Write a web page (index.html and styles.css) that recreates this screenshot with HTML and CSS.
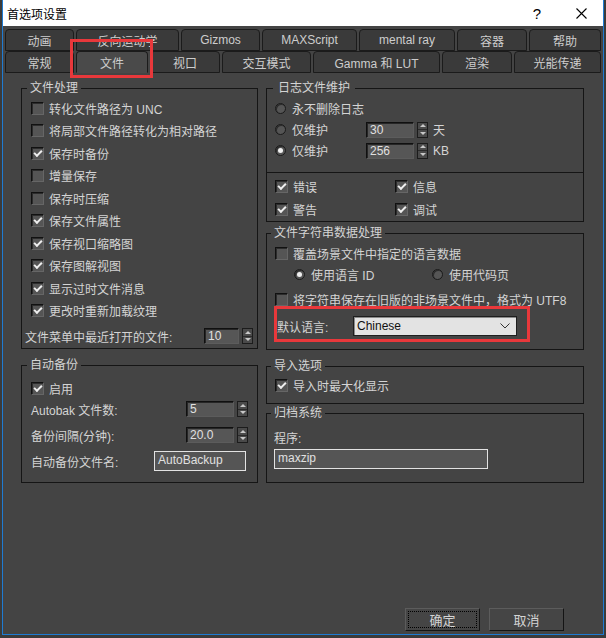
FILE: index.html
```html
<!DOCTYPE html>
<html lang="zh-CN">
<head>
    <meta charset="UTF-8">
    <title>首选项设置</title>
    <link rel="stylesheet" href="styles.css">
</head>
<body>
<div class="window">
    <div class="titlebar">
        <span class="title">首选项设置</span>
        <span class="title-btn">?</span>
        <span class="title-btn">
            <svg width="11" height="11" viewBox="0 0 11 11"><path d="M0.5 0.5 L10.5 10.5 M10.5 0.5 L0.5 10.5" stroke="#000" stroke-width="1.1" fill="none"/></svg>
        </span>
    </div>

    <div class="tabs">
        <div class="tab-row row-a">
            <div class="tab">动画</div>
            <div class="tab">反向运动学</div>
            <div class="tab">Gizmos</div>
            <div class="tab">MAXScript</div>
            <div class="tab">mental ray</div>
            <div class="tab">容器</div>
            <div class="tab">帮助</div>
        </div>
        <div class="tab-row row-b">
            <div class="tab">常规</div>
            <div class="tab active">文件</div>
            <div class="tab">视口</div>
            <div class="tab">交互模式</div>
            <div class="tab">Gamma 和 LUT</div>
            <div class="tab">渲染</div>
            <div class="tab">光能传递</div>
        </div>
    </div>

    <div class="panel">
        <div class="col-left">
            <fieldset class="fs-file">
                <legend>文件处理</legend>
                <div class="row"><span class="check"></span>转化文件路径为 UNC</div>
                <div class="row"><span class="check"></span>将局部文件路径转化为相对路径</div>
                <div class="row"><span class="check on"></span>保存时备份</div>
                <div class="row"><span class="check"></span>增量保存</div>
                <div class="row"><span class="check"></span>保存时压缩</div>
                <div class="row"><span class="check on"></span>保存文件属性</div>
                <div class="row"><span class="check on"></span>保存视口缩略图</div>
                <div class="row"><span class="check on"></span>保存图解视图</div>
                <div class="row"><span class="check on"></span>显示过时文件消息</div>
                <div class="row"><span class="check on"></span>更改时重新加载纹理</div>
                <div class="row recent">
                    <span>文件菜单中最近打开的文件:</span>
                    <span class="spin push">
                        <span class="spin-val small">10</span>
                        <span class="spin-btn"><i class="up"></i><i class="down"></i></span>
                    </span>
                </div>
            </fieldset>

            <fieldset class="fs-backup">
                <legend>自动备份</legend>
                <div class="row first"><span class="check on"></span>启用</div>
                <div class="row field">
                    <span>Autobak 文件数:</span>
                    <span class="spin push">
                        <span class="spin-val">5</span>
                        <span class="spin-btn"><i class="up"></i><i class="down"></i></span>
                    </span>
                </div>
                <div class="row field spaced">
                    <span>备份间隔(分钟):</span>
                    <span class="spin push">
                        <span class="spin-val">20.0</span>
                        <span class="spin-btn"><i class="up"></i><i class="down"></i></span>
                    </span>
                </div>
                <div class="row field spaced">
                    <span>自动备份文件名:</span>
                    <span class="textbox push name">AutoBackup</span>
                </div>
            </fieldset>
        </div>

        <div class="col-right">
            <fieldset class="fs-log">
                <legend>日志文件维护</legend>
                <div class="row radio-row"><span class="radio"></span>永不删除日志</div>
                <div class="row radio-row">
                    <span class="radio"></span><span class="keep">仅维护</span>
                    <span class="spin">
                        <span class="spin-val">30</span>
                        <span class="spin-btn"><i class="up"></i><i class="down"></i></span>
                    </span>
                    <span class="unit">天</span>
                </div>
                <div class="row radio-row">
                    <span class="radio on"></span><span class="keep">仅维护</span>
                    <span class="spin">
                        <span class="spin-val">256</span>
                        <span class="spin-btn"><i class="up"></i><i class="down"></i></span>
                    </span>
                    <span class="unit">KB</span>
                </div>
                <div class="divider"></div>
                <div class="log-checks">
                    <div class="row"><span class="check on"></span>错误</div>
                    <div class="row"><span class="check on"></span>信息</div>
                    <div class="row"><span class="check on"></span>警告</div>
                    <div class="row"><span class="check on"></span>调试</div>
                </div>
            </fieldset>

            <fieldset class="fs-string">
                <legend>文件字符串数据处理</legend>
                <div class="row"><span class="check"></span>覆盖场景文件中指定的语言数据</div>
                <div class="row options">
                    <span class="opt"><span class="radio on"></span>使用语言 ID</span>
                    <span class="opt"><span class="radio"></span>使用代码页</span>
                </div>
                <div class="row legacy"><span class="check"></span>将字符串保存在旧版的非场景文件中，格式为 UTF8</div>
                <div class="row lang">
                    <span class="lang-label">默认语言:</span>
                    <span class="select">Chinese
                        <svg width="10" height="6" viewBox="0 0 10 6"><path d="M0.5 0.5 L5 5 L9.5 0.5" stroke="#333" fill="none"/></svg>
                    </span>
                </div>
            </fieldset>

            <fieldset class="fs-import">
                <legend>导入选项</legend>
                <div class="row"><span class="check on"></span>导入时最大化显示</div>
            </fieldset>

            <fieldset class="fs-archive">
                <legend>归档系统</legend>
                <div class="row prog">程序:</div>
                <div class="textbox program">maxzip</div>
            </fieldset>
        </div>
    </div>

    <div class="actions">
        <button class="btn focus">确定</button>
        <button class="btn">取消</button>
    </div>

    <div class="mark mark-tab"></div>
    <div class="mark mark-lang"></div>
</div>
</body>
</html>
```

FILE: styles.css
```css
body {
    margin: 0;
    background: #3b3b3b;
    font-family: "Liberation Sans", "Noto Sans CJK SC", sans-serif;
    font-size: 12px;
    color: #d4d4d4;
}

.window {
    position: relative;
    width: 600px;
    height: 634px;
    margin-left: 2px;
    border: 1px solid #1f7bd2;
    border-top: 0;
    background: #444;
    display: flex;
    flex-direction: column;
}

/* title */
.titlebar {
    height: 26px;
    background: #fff;
    color: #000;
    display: flex;
    align-items: center;
    padding-left: 4px;
}

.titlebar .title {
    flex: 1;
    font-size: 12px;
}

.title-btn {
    width: 44px;
    height: 26px;
    display: flex;
    align-items: center;
    justify-content: center;
    font-size: 15px;
}

/* tabs */
.tabs {
    margin-top: 3px;
    padding: 0 2px;
}

.tab-row {
    display: flex;
    gap: 2px;
    height: 22px;
}

.tab {
    box-sizing: border-box;
    border: 1px solid #1b1b1b;
    border-radius: 4px 4px 0 0;
    background: #3a3a3a;
    color: #cdcdcd;
    display: flex;
    align-items: center;
    justify-content: center;
    font-size: 12px;
}

.row-a .tab:nth-child(1) { width: 69px; }
.row-a .tab:nth-child(2) { width: 103px; }
.row-a .tab:nth-child(3) { width: 79px; }
.row-a .tab:nth-child(4) { width: 95px; }
.row-a .tab:nth-child(5) { width: 96px; }
.row-a .tab:nth-child(6) { width: 70px; }
.row-a .tab:nth-child(7) { width: 72px; }

.row-b .tab:nth-child(1) { width: 69px; }
.row-b .tab:nth-child(2) { width: 72px; }
.row-b .tab:nth-child(3) { width: 70px; }
.row-b .tab:nth-child(4) { width: 89px; }
.row-b .tab:nth-child(5) { width: 127px; }
.row-b .tab:nth-child(6) { width: 70px; }
.row-b .tab:nth-child(7) { width: 87px; }

.tab.active {
    background: #4a4a4a;
    border-bottom-color: #4a4a4a;
}

/* panel */
.panel {
    flex: 1;
    display: flex;
    gap: 8px;
    padding: 7px 0 0 18px;
}

.col-left { width: 237px; }
.col-right { width: 318px; }

fieldset {
    box-sizing: border-box;
    margin: 0;
    min-width: 0;
    border: 1px solid #151515;
    padding: 0 8px;
}

legend {
    margin-left: -4px;
    padding: 0 3px;
    line-height: 16px;
}

.row {
    display: flex;
    align-items: center;
    height: 22.5px;
    white-space: nowrap;
}

.push { margin-left: auto; }

/* checkbox + radio */
.check {
    box-sizing: border-box;
    flex: none;
    width: 13px;
    height: 13px;
    margin-right: 5px;
    background: #555;
    border: 1px solid;
    border-color: #111 #666 #666 #111;
    box-shadow: inset 1px 1px 0 #2c2c2c;
}

.check.on::after {
    content: '';
    display: block;
    width: 6px;
    height: 3px;
    margin: 2px 0 0 2px;
    border-left: 2px solid #eee;
    border-bottom: 2px solid #eee;
    transform: rotate(-45deg);
}

.radio {
    box-sizing: border-box;
    flex: none;
    width: 11px;
    height: 11px;
    margin-right: 6px;
    border-radius: 50%;
    background: #555;
    border: 1px solid #1a1a1a;
    box-shadow: inset 1px 1px 0 #2c2c2c;
}

.radio.on::after {
    content: '';
    display: block;
    width: 5px;
    height: 5px;
    margin: 2px;
    border-radius: 50%;
    background: #f0f0f0;
}

/* spinner */
.spin {
    display: flex;
    gap: 3px;
    height: 16px;
}

.spin-val {
    box-sizing: border-box;
    width: 48px;
    padding-left: 3px;
    line-height: 14px;
    background: #565656;
    border: 1px solid;
    border-color: #101010 #5c5c5c #5c5c5c #101010;
    box-shadow: inset 1px 1px 0 #262626;
    color: #e0e0e0;
}

.spin-val.small { width: 35px; }

.spin-btn {
    box-sizing: border-box;
    width: 11px;
    display: flex;
    flex-direction: column;
    border: 1px solid #1c1c1c;
    background: #4a4a4a;
}

.spin-btn i {
    flex: 1;
    display: flex;
    align-items: center;
    justify-content: center;
}

.spin-btn i + i { border-top: 1px solid #2a2a2a; }

.spin-btn .up::before,
.spin-btn .down::before {
    content: '';
    border-left: 3px solid transparent;
    border-right: 3px solid transparent;
}

.spin-btn .up::before { border-bottom: 3px solid #c8c8c8; }
.spin-btn .down::before { border-top: 3px solid #c8c8c8; }

.textbox {
    box-sizing: border-box;
    height: 19px;
    padding-left: 3px;
    line-height: 17px;
    background: #555;
    border: 1px solid #e2e2e2;
    color: #e0e0e0;
}

/* groups */
.fs-file {
    height: 269px;
    padding: 1px 4px 0 9px;
}

.fs-file .row.recent {
    height: 22px;
    margin: 3px 0 0 -6px;
}

.fs-backup {
    margin-top: 8px;
    height: 126px;
    padding: 4px 9px 0 9px;
}

.fs-backup .row.first { height: 22px; }
.fs-backup .row.field { height: 20px; }
.fs-backup .row.spaced { margin-top: 6px; }

.textbox.name {
    width: 92px;
    height: 20px;
    margin-right: 2px;
}

.fs-log {
    height: 142px;
    padding-top: 2px;
}

.fs-log legend {
    margin-left: -2px;
    padding: 0 5px;
}

.radio-row { height: 21px; }

.keep { width: 74px; }

.unit { margin-left: 5px; }

.divider {
    margin: 11px -8px 0;
    border-top: 1px solid #151515;
}

.log-checks {
    display: grid;
    grid-template-columns: 120px 120px;
    padding-top: 1.5px;
}

.log-checks .row { height: 23px; }

.fs-string {
    margin-top: 3px;
    height: 125px;
    padding-top: 1px;
}

.fs-string .row { height: 22px; }

.fs-string .options {
    height: 20px;
    padding-left: 19px;
}

.opt {
    display: flex;
    align-items: center;
    width: 138px;
}

.fs-string .legacy { height: 30px; }

.fs-string .lang {
    height: 24px;
    padding-left: 2px;
}

.lang-label { width: 76px; }

.select {
    box-sizing: border-box;
    width: 164px;
    height: 20px;
    display: flex;
    align-items: center;
    justify-content: space-between;
    padding: 0 6px 0 3px;
    background: #e3e3e3;
    border: 1px solid #1e1e1e;
    box-shadow: inset 1px 1px 0 #8a8a8a;
    color: #111;
}

.fs-import {
    margin-top: 8px;
    height: 46px;
}

.fs-archive {
    margin-top: 1px;
    height: 78px;
    padding-top: 6px;
}

.fs-archive .prog {
    height: 20px;
    margin-left: -1px;
}

.textbox.program {
    width: 214px;
    height: 20px;
    margin: 2px 0 0 -1px;
}

/* buttons */
.actions {
    display: flex;
    justify-content: flex-end;
    gap: 9px;
    padding: 0 39px 3px 0;
}

.btn {
    box-sizing: border-box;
    width: 75px;
    height: 23px;
    padding: 0;
    background: #454545;
    border: 1px solid;
    border-color: #5c5c5c #141414 #141414 #5c5c5c;
    color: #d4d4d4;
    font-family: "Liberation Sans", "Noto Sans CJK SC", sans-serif;
    font-size: 13px;
}

.btn.focus {
    outline: 1px dotted #000;
    outline-offset: -4px;
}

/* red highlight marks */
.mark {
    position: absolute;
    box-sizing: border-box;
    border: 3px solid #e8383b;
}

.mark-tab {
    left: 67px;
    top: 39px;
    width: 83px;
    height: 39px;
}

.mark-lang {
    left: 271px;
    top: 306px;
    width: 256px;
    height: 36px;
}
```
